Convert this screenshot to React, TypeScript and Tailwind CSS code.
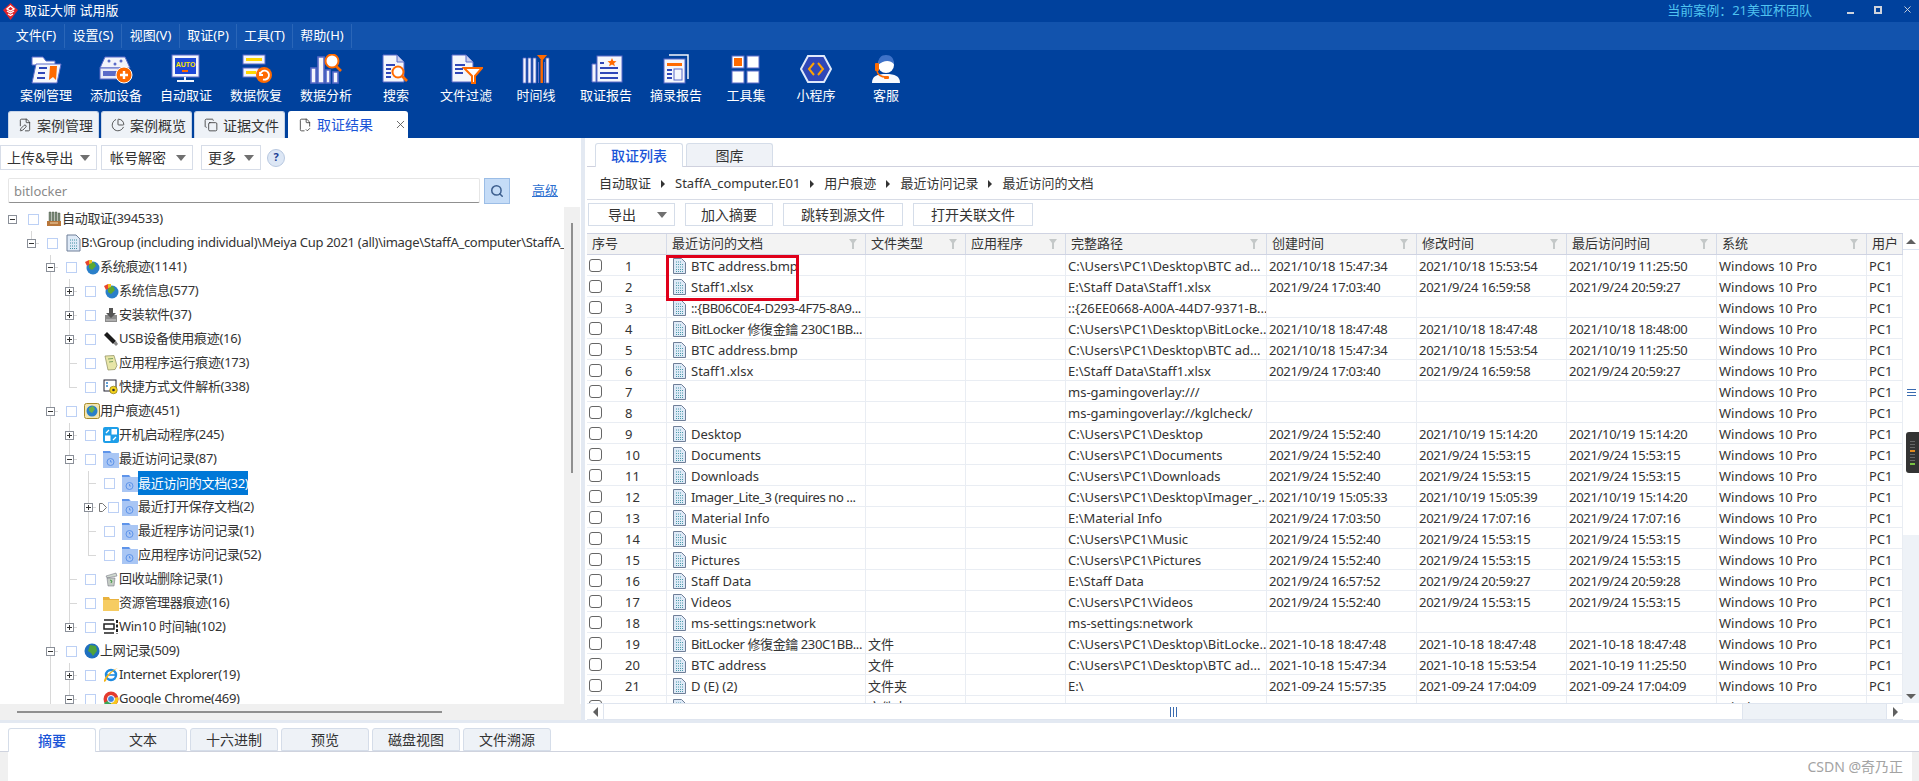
import React from "react";
import { FilePen, PieChart, Copy, FileCheck2, X, Search } from "lucide-react";

// ---- toolbar icons ----
const P = "#5a6bc8";
const O = "#ff6a00";

const ToolIcon = ({ name }: { name: string }) => {
  switch (name) {
    case "case":
      return (
        <svg width="34" height="30" viewBox="0 0 34 30">
          <path d="M3 3h11l3 4h9v4H3z" fill="#fff" stroke={P} />
          <path d="M7 10h25l-4 19H3z" fill="#f4f6fc" stroke={P} />
          <path d="M10 14h8M9 19h7M8 24h8" stroke="#2f47b8" strokeWidth="2" />
          <path d="M21 12h7l-1 14-3-3-4 3z" fill={O} />
        </svg>
      );
    case "device":
      return (
        <svg width="34" height="30" viewBox="0 0 34 30">
          <path d="M6 3h20l5 11H1z" fill="#f2f4fb" stroke={P} />
          <circle cx="10" cy="7" r="1.5" fill={P} />
          <circle cx="22" cy="7" r="1.5" fill={P} />
          <circle cx="16" cy="10" r="1.5" fill={P} />
          <rect x="1" y="14" width="26" height="11" fill="#e8ebf8" stroke={P} />
          <rect x="4" y="17" width="14" height="5" fill={P} />
          <circle cx="25" cy="21" r="8" fill={O} stroke="#fff" />
          <path d="M25 17v8M21 21h8" stroke="#fff" strokeWidth="2.4" />
        </svg>
      );
    case "auto":
      return (
        <svg width="34" height="30" viewBox="0 0 34 30">
          <rect x="3" y="1" width="27" height="22" fill="#f4f6fc" stroke={P} />
          <rect x="6" y="4" width="21" height="16" fill="#1f49d8" />
          <text x="16.5" y="13" fontSize="7" fontWeight="700" fill="#ffe500" textAnchor="middle" fontFamily="Liberation Sans, sans-serif">AUTO</text>
          <rect x="13" y="16" width="6" height="2" fill={O} />
          <path d="M16 23v3M8 27h17" stroke="#f4f6fc" strokeWidth="2" />
        </svg>
      );
    case "recover":
      return (
        <svg width="34" height="30" viewBox="0 0 34 30">
          <rect x="4" y="1" width="22" height="9" fill="#f4f6fc" stroke={P} />
          <rect x="7" y="4" width="16" height="3" fill="#ffd800" />
          <rect x="4" y="14" width="16" height="9" fill="#f4f6fc" stroke={P} />
          <rect x="7" y="17" width="10" height="3" fill="#ffd800" />
          <circle cx="25" cy="21" r="8" fill={O} />
          <path d="M21 21a4.5 4.5 0 1 1 3 4.4M21 18v3h3" fill="none" stroke="#fff" strokeWidth="1.8" />
        </svg>
      );
    case "analysis":
      return (
        <svg width="34" height="30" viewBox="0 0 34 30">
          <path d="M2 14h5v15H2zM9 3h6v26H9zM17 16h4v13h-4zM24 18h5v11h-5z" fill="#f4f6fc" stroke={P} strokeWidth="1.6" />
          <circle cx="23" cy="7" r="6.5" fill="#fff" stroke={O} strokeWidth="2" />
          <path d="M27 12l5 5" stroke={O} strokeWidth="2.6" />
        </svg>
      );
    case "search":
      return (
        <svg width="34" height="30" viewBox="0 0 34 30">
          <path d="M4 1h14l7 7v20H4z" fill="#f4f6fc" stroke={P} />
          <path d="M18 1v7h7" fill="#c9d0ee" stroke={P} />
          <path d="M7 11h9M7 15h5M7 19h5M7 23h5" stroke="#2f47b8" strokeWidth="2" />
          <circle cx="19" cy="18" r="5.5" fill="#fff" stroke={O} strokeWidth="2" />
          <path d="M23 22l5 5" stroke={O} strokeWidth="2.6" />
        </svg>
      );
    case "filter":
      return (
        <svg width="34" height="30" viewBox="0 0 34 30">
          <path d="M3 1h14l7 7v20H3z" fill="#f4f6fc" stroke={P} />
          <path d="M17 1v7h7" fill="#c9d0ee" stroke={P} />
          <path d="M6 11h10M6 15h8M6 19h8" stroke="#2f47b8" strokeWidth="2" />
          <path d="M15 14h18l-7 8v7h-3v-7z" fill="#fff" stroke={O} strokeWidth="2" />
        </svg>
      );
    case "timeline":
      return (
        <svg width="34" height="30" viewBox="0 0 34 30">
          <path d="M4 4h3v25H4zM9 4h3v25H9zM14 4h3v25h-3zM27 4h3v25h-3z" fill="#f4f6fc" stroke={P} strokeWidth=".8" />
          <path d="M19 8h1v21h-1zM25 8h1v21h-1z" fill={P} />
          <path d="M18 1h10l-5 6z" fill={O} />
          <rect x="21.5" y="6" width="2.4" height="23" fill={O} />
        </svg>
      );
    case "report":
      return (
        <svg width="34" height="30" viewBox="0 0 34 30">
          <path d="M7 10H3v18h4z" fill="#f4f6fc" stroke={P} />
          <rect x="8" y="2" width="25" height="26" fill="#f4f6fc" stroke={P} />
          <path d="M23 4l1.3 3 3.2.2-2.4 2 .8 3.1-2.9-1.7-2.9 1.7.8-3.1-2.4-2 3.2-.2z" fill={O} />
          <path d="M11 9h4M11 14h18M11 19h18M11 24h18" stroke="#2f47b8" strokeWidth="2" />
        </svg>
      );
    case "excerpt":
      return (
        <svg width="34" height="30" viewBox="0 0 34 30">
          <path d="M10 1h19v24" fill="none" stroke="#f4f6fc" strokeWidth="1.5" />
          <rect x="5" y="5" width="21" height="24" fill="#f4f6fc" stroke={P} />
          <rect x="8" y="9" width="15" height="3" fill={O} />
          <path d="M8 16h5M8 20h5M8 24h5" stroke="#2f47b8" strokeWidth="2" />
          <rect x="15" y="15" width="8" height="11" fill="#f4f6fc" stroke={P} />
        </svg>
      );
    case "tools":
      return (
        <svg width="34" height="30" viewBox="0 0 34 30">
          <rect x="3" y="2" width="12" height="12" fill="#fff" stroke={P} />
          <rect x="5" y="4" width="8" height="8" fill={O} />
          <rect x="18" y="2" width="12" height="12" fill="#fff" stroke={P} />
          <rect x="3" y="17" width="12" height="12" fill="#fff" stroke={P} />
          <rect x="18" y="17" width="12" height="12" fill="#fff" stroke={P} />
        </svg>
      );
    case "mini":
      return (
        <svg width="34" height="30" viewBox="0 0 34 30">
          <path d="M9 2h16l7 13-7 13H9L2 15z" fill="#2f47b8" stroke="#dfe9fb" strokeWidth="2" />
          <path d="M15 9l-5 6 5 6M19 9l5 6-5 6" fill="none" stroke="#ffa200" strokeWidth="2" />
        </svg>
      );
    default:
      return (
        <svg width="34" height="30" viewBox="0 0 34 30">
          <path d="M3 29c0-7 5-9 14-9s14 2 14 9z" fill="#f8f9fd" />
          <circle cx="17" cy="11" r="8" fill="#fff" />
          <path d="M9 11c0-7 3-10 8-10s8 3 8 9c-4-4-10-4-16 1z" fill="#3f72c8" />
          <rect x="6" y="9" width="4" height="8" rx="1" fill={O} />
          <path d="M8 17c1 5 5 6 9 6" fill="none" stroke={O} strokeWidth="1.4" />
          <rect x="15" y="22" width="5" height="3" rx="1" fill={O} />
        </svg>
      );
  }
};

const Logo = () => (
  <svg width="15" height="17" viewBox="0 0 15 17">
    <path d="M7.5 0L15 7 7.5 17 0 7z" fill="#e2252b" />
    <path d="M7.5 3L11 6 7.5 8 4 6zM4 8l3.5 2L11 8M5 11l2.5 1.5L10 11" fill="none" stroke="#fff" strokeWidth="1.4" />
  </svg>
);

// ---- tree icons ----
const TreeIcon = ({ name }: { name: string }) => {
  switch (name) {
    case "root":
      return (
        <svg width="16" height="16" viewBox="0 0 16 16">
          <path d="M3 1h2v10H3zM6 1h2v10H6zM9 1h2v10H9zM12 2h2v9h-2z" fill="#7f8f7d" stroke="#3c4a3a" strokeWidth=".4" />
          <path d="M1 10h14v5H1z" fill="#b8763a" />
          <path d="M4 12h8" stroke="#f0d8b0" />
        </svg>
      );
    case "doc":
      return (
        <svg width="16" height="18" viewBox="0 0 16 18">
          <path d="M2 1h9l4 4v12H2z" fill="#dfeaf7" stroke="#6f7f98" />
          <path d="M5 6h7M5 9h7M5 12h7M5 14.5h7" stroke="#3f8fa0" strokeDasharray="1 1" />
        </svg>
      );
    case "sys":
      return (
        <svg width="16" height="16" viewBox="0 0 16 16">
          <circle cx="9" cy="9" r="6.5" fill="#2a7fc9" />
          <path d="M5 5l5-2 2 4-4 4-3-2z" fill="#5aa832" />
          <path d="M1 3l4-2 1 4-3 2z" fill="#e8452c" />
          <path d="M5 1l3 0 0 3-3 1z" fill="#f3c11d" />
        </svg>
      );
    case "install":
      return (
        <svg width="16" height="16" viewBox="0 0 16 16">
          <path d="M2 8h12v7H2z" fill="#8b8b8b" />
          <path d="M6 1h4v5h3l-5 5-5-5h3z" fill="#555" />
          <path d="M3 13h10" stroke="#d0d0d0" />
        </svg>
      );
    case "usb":
      return (
        <svg width="16" height="16" viewBox="0 0 16 16">
          <path d="M1 4l3-3 9 9-3 3z" fill="#1c1c1c" />
          <path d="M10.5 12.5l2.5-2.5 2 3-2 2z" fill="#888" />
        </svg>
      );
    case "note":
      return (
        <svg width="16" height="16" viewBox="0 0 16 16">
          <path d="M2 1l9-.5 3 10-2 4-7 .5z" fill="#e8e6a8" stroke="#8d8d5c" strokeWidth=".7" />
          <path d="M5 4l5-.5M6 7l4-.5" stroke="#7aa060" />
        </svg>
      );
    case "shortcut":
      return (
        <svg width="16" height="16" viewBox="0 0 16 16">
          <rect x="1" y="1" width="12" height="11" fill="#fff" stroke="#223" />
          <path d="M3 4h2M3 7h2" stroke="#2a7fc9" strokeWidth="1.5" />
          <circle cx="10.5" cy="11" r="3.8" fill="#f3d21d" stroke="#776600" strokeWidth=".6" />
          <circle cx="10.5" cy="11" r="1.3" fill="#333" />
        </svg>
      );
    case "user":
      return (
        <svg width="16" height="16" viewBox="0 0 16 16">
          <rect x=".5" y=".5" width="15" height="15" rx="2" fill="#f4e6b0" stroke="#a78a2a" />
          <circle cx="8" cy="8" r="5.5" fill="#2a7fc9" />
          <path d="M5 5l4-2 2 3-3 4-3-2z" fill="#6ab04a" />
        </svg>
      );
    case "startup":
      return (
        <svg width="16" height="16" viewBox="0 0 16 16">
          <rect width="16" height="16" rx="2" fill="#1e9ee8" />
          <rect x="2" y="8.5" width="5.5" height="5.5" fill="#fff" />
          <rect x="8.5" y="2" width="5.5" height="5.5" fill="#fff" />
          <path d="M3 6l3-3M10 13l3-3" stroke="#fff" strokeWidth="1.3" />
        </svg>
      );
    case "recent":
      return (
        <svg width="16" height="17" viewBox="0 0 16 17">
          <path d="M0 0h7l2 2h7v15H0z" fill="#a9c6f4" />
          <path d="M0 0h7l1 2H0z" fill="#5e94ea" />
          <circle cx="7.5" cy="11" r="3.5" fill="none" stroke="#5e94ea" />
          <path d="M7.5 9v2H9" fill="none" stroke="#5e94ea" />
        </svg>
      );
    case "bin":
      return (
        <svg width="16" height="16" viewBox="0 0 16 16">
          <path d="M3 5l10-3 1 3-10 2z" fill="#cfd8cf" stroke="#667" strokeWidth=".5" />
          <path d="M4 7h8l-1 8H5z" fill="#c4ccc4" stroke="#667" strokeWidth=".5" />
          <path d="M7 9l2 1-1 2" stroke="#3f9a3f" fill="none" />
        </svg>
      );
    case "folder":
      return (
        <svg width="16" height="16" viewBox="0 0 16 16">
          <path d="M0 2h6l1 2h9v12H0z" fill="#e9b23e" />
          <path d="M0 5h16v11H0z" fill="#f6cc62" />
        </svg>
      );
    case "win10":
      return (
        <svg width="16" height="16" viewBox="0 0 16 16">
          <path d="M1 1h10M1 14h10M1 5h10v5H1z" fill="none" stroke="#222" strokeWidth="1.5" />
          <path d="M14 1v14" stroke="#222" strokeWidth="2" strokeDasharray="3 1.5" />
        </svg>
      );
    case "web":
      return (
        <svg width="16" height="16" viewBox="0 0 16 16">
          <circle cx="8" cy="8" r="7.5" fill="#1f6fc0" />
          <path d="M6 2l6 1 1 5-4 5-2-3-3-2z" fill="#4fa33c" />
        </svg>
      );
    case "ie":
      return (
        <svg width="16" height="16" viewBox="0 0 16 16">
          <circle cx="8" cy="8" r="5" fill="none" stroke="#1f8be0" strokeWidth="2.4" />
          <path d="M4 8h9" stroke="#1f8be0" strokeWidth="1.6" />
          <path d="M1 15C0 11 8 3 15 1c-3 1-11 8-12 13z" fill="#f2b51d" />
        </svg>
      );
    default:
      return (
        <svg width="16" height="16" viewBox="0 0 16 16">
          <circle cx="8" cy="8" r="7.5" fill="#e33b2e" />
          <path d="M8 8L1 12a7.5 7.5 0 0 0 7 3.5z" fill="#3aa655" />
          <path d="M8 8l7-2a7.5 7.5 0 0 1-7 9.5z" fill="#f7c61c" />
          <circle cx="8" cy="8" r="3.5" fill="#3b82e0" stroke="#fff" />
        </svg>
      );
  }
};

const FileIcon = () => (
  <svg width="13" height="16" viewBox="0 0 13 16" className="shrink-0">
    <path d="M.5.5h8l4 4v11H.5z" fill="#dfeaf7" stroke="#6f7f98" />
    <path d="M3 4h5M3 6.5h7M3 9h7M3 11.5h7M3 13.5h7" stroke="#4a9aa8" strokeDasharray="1 1" />
  </svg>
);

const Funnel = () => (
  <svg width="8" height="10" viewBox="0 0 8 10" className="shrink-0">
    <path d="M0 0h8L5 4v6H3V4z" fill="#c4c8c8" />
  </svg>
);

const Caret = () => <span className="ml-auto w-0 h-0 border-x-[5px] border-x-transparent border-t-[6px] border-t-[#707070]" />;

// ---- data ----
const menus = ["文件(F)", "设置(S)", "视图(V)", "取证(P)", "工具(T)", "帮助(H)"];
const menuWidths = ["w-[57px]", "w-[57px]", "w-[58px]", "w-[57px]", "w-[56px]", "w-[59px]"];

const tools = [
  ["case", "案例管理"], ["device", "添加设备"], ["auto", "自动取证"], ["recover", "数据恢复"], ["analysis", "数据分析"],
  ["search", "搜索"], ["filter", "文件过滤"], ["timeline", "时间线"], ["report", "取证报告"], ["excerpt", "摘录报告"],
  ["tools", "工具集"], ["mini", "小程序"], ["service", "客服"],
];

type TreeRow = { level: number; exp?: string; icon: string; label: string; guides: number[]; last?: boolean; selected?: boolean; marker?: boolean };

const tree: TreeRow[] = [
  { level: 0, exp: "-", icon: "root", label: "自动取证(394533)", guides: [] },
  { level: 1, exp: "-", icon: "doc", label: "B:\\Group (including individual)\\Meiya Cup 2021 (all)\\image\\StaffA_computer\\StaffA_computer.E01", guides: [1], last: true },
  { level: 2, exp: "-", icon: "sys", label: "系统痕迹(1141)", guides: [2] },
  { level: 3, exp: "+", icon: "sys", label: "系统信息(577)", guides: [2, 3] },
  { level: 3, exp: "+", icon: "install", label: "安装软件(37)", guides: [2, 3] },
  { level: 3, exp: "+", icon: "usb", label: "USB设备使用痕迹(16)", guides: [2, 3] },
  { level: 3, icon: "note", label: "应用程序运行痕迹(173)", guides: [2, 3] },
  { level: 3, icon: "shortcut", label: "快捷方式文件解析(338)", guides: [2, 3], last: true },
  { level: 2, exp: "-", icon: "user", label: "用户痕迹(451)", guides: [2] },
  { level: 3, exp: "+", icon: "startup", label: "开机启动程序(245)", guides: [2, 3] },
  { level: 3, exp: "-", icon: "recent", label: "最近访问记录(87)", guides: [2, 3] },
  { level: 4, icon: "recent", label: "最近访问的文档(32)", guides: [2, 3, 4], selected: true },
  { level: 4, exp: "+", icon: "recent", label: "最近打开保存文档(2)", guides: [2, 3, 4], marker: true },
  { level: 4, icon: "recent", label: "最近程序访问记录(1)", guides: [2, 3, 4] },
  { level: 4, icon: "recent", label: "应用程序访问记录(52)", guides: [2, 3, 4], last: true },
  { level: 3, icon: "bin", label: "回收站删除记录(1)", guides: [2, 3] },
  { level: 3, icon: "folder", label: "资源管理器痕迹(16)", guides: [2, 3] },
  { level: 3, exp: "+", icon: "win10", label: "Win10 时间轴(102)", guides: [2, 3], last: true },
  { level: 2, exp: "-", icon: "web", label: "上网记录(509)", guides: [2] },
  { level: 3, exp: "+", icon: "ie", label: "Internet Explorer(19)", guides: [2, 3] },
  { level: 3, exp: "-", icon: "chrome", label: "Google Chrome(469)", guides: [2, 3] },
];

const indents = ["pl-[8px]", "pl-[27px]", "pl-[46px]", "pl-[65px]", "pl-[84px]"];

const headers = ["序号", "最近访问的文档", "文件类型", "应用程序", "完整路径", "创建时间", "修改时间", "最后访问时间", "系统", "用户"];
const gridCols = "grid grid-cols-[80px_199px_100px_100px_201px_150px_150px_150px_150px_36px]";

const t1 = ["2021/10/18 15:47:34", "2021/10/18 15:53:54", "2021/10/19 11:25:50"];
const t2 = ["2021/9/24 17:03:40", "2021/9/24 16:59:58", "2021/9/24 20:59:27"];
const t3 = ["2021/9/24 15:52:40", "2021/9/24 15:53:15", "2021/9/24 15:53:15"];
const none = ["", "", ""];

const rows: [string, string, string, string[]][] = [
  ["BTC address.bmp", "", "C:\\Users\\PC1\\Desktop\\BTC ad...", t1],
  ["Staff1.xlsx", "", "E:\\Staff Data\\Staff1.xlsx", t2],
  ["::{BB06C0E4-D293-4F75-8A9...", "", "::{26EE0668-A00A-44D7-9371-B...", none],
  ["BitLocker 修復金鑰 230C1BB...", "", "C:\\Users\\PC1\\Desktop\\BitLocke...", ["2021/10/18 18:47:48", "2021/10/18 18:47:48", "2021/10/18 18:48:00"]],
  ["BTC address.bmp", "", "C:\\Users\\PC1\\Desktop\\BTC ad...", t1],
  ["Staff1.xlsx", "", "E:\\Staff Data\\Staff1.xlsx", t2],
  ["", "", "ms-gamingoverlay:///", none],
  ["", "", "ms-gamingoverlay://kglcheck/", none],
  ["Desktop", "", "C:\\Users\\PC1\\Desktop", ["2021/9/24 15:52:40", "2021/10/19 15:14:20", "2021/10/19 15:14:20"]],
  ["Documents", "", "C:\\Users\\PC1\\Documents", t3],
  ["Downloads", "", "C:\\Users\\PC1\\Downloads", t3],
  ["Imager_Lite_3 (requires no ...", "", "C:\\Users\\PC1\\Desktop\\Imager_...", ["2021/10/19 15:05:33", "2021/10/19 15:05:39", "2021/10/19 15:14:20"]],
  ["Material Info", "", "E:\\Material Info", ["2021/9/24 17:03:50", "2021/9/24 17:07:16", "2021/9/24 17:07:16"]],
  ["Music", "", "C:\\Users\\PC1\\Music", t3],
  ["Pictures", "", "C:\\Users\\PC1\\Pictures", t3],
  ["Staff Data", "", "E:\\Staff Data", ["2021/9/24 16:57:52", "2021/9/24 20:59:27", "2021/9/24 20:59:28"]],
  ["Videos", "", "C:\\Users\\PC1\\Videos", t3],
  ["ms-settings:network", "", "ms-settings:network", none],
  ["BitLocker 修復金鑰 230C1BB...", "文件", "C:\\Users\\PC1\\Desktop\\BitLocke...", ["2021-10-18 18:47:48", "2021-10-18 18:47:48", "2021-10-18 18:47:48"]],
  ["BTC address", "文件", "C:\\Users\\PC1\\Desktop\\BTC ad...", ["2021-10-18 15:47:34", "2021-10-18 15:53:54", "2021-10-19 11:25:50"]],
  ["D (E) (2)", "文件夹", "E:\\", ["2021-09-24 15:57:35", "2021-09-24 17:04:09", "2021-09-24 17:04:09"]],
  ["", "文件夹", "", none],
];

const bottomTabs = ["摘要", "文本", "十六进制", "预览", "磁盘视图", "文件溯源"];

const Cell = ({ children, className = "" }: { children?: React.ReactNode; className?: string }) => (
  <div className={`h-[21px] leading-[22px] border-r border-b border-[#e9edf3] pl-[2px] overflow-hidden whitespace-nowrap ${className}`}>{children}</div>
);

const ArrowL = () => <span className="w-0 h-0 border-y-[5px] border-y-transparent border-r-[5px] border-r-[#606060]" />;
const ArrowR = () => <span className="w-0 h-0 border-y-[5px] border-y-transparent border-l-[5px] border-l-[#606060]" />;
const Crumb = () => <span className="w-0 h-0 mx-[10px] border-y-[4px] border-y-transparent border-l-[4px] border-l-[#333]" />;

export default function App() {
  return (
    <div className="relative w-[1919px] h-[781px] flex flex-col overflow-hidden bg-white text-[#333] text-[13px] font-['Noto_Sans','Noto_Sans_CJK_SC',sans-serif]">
      {/* title bar */}
      <div className="h-[22px] bg-[#00419d] flex items-center text-white">
        <div className="ml-[3px] mr-[6px] flex"><Logo /></div>
        <span>取证大师 试用版</span>
        <span className="ml-auto mr-[35px] text-[#4fc3f0]">当前案例：21美亚杯团队</span>
        <span className="w-[7px] h-[2px] bg-[#cfd3dc] mr-[20px] mt-[3px]" />
        <span className="relative w-[8px] h-[8px] border-2 border-[#cfd3dc] mr-[20px] -mt-[3px]" />
        <X size={11} strokeWidth={2} className="text-[#d6d9e0] mr-[6px] -mt-[3px]" />
      </div>

      {/* menu */}
      <div className="h-[28px] bg-[#1253ad] flex items-center text-white pl-[8px]">
        {menus.map((m, i) => (
          <div key={m} className={`${menuWidths[i]} h-[24px] flex items-center justify-center border-r border-[#2a66b8]`}>{m}</div>
        ))}
      </div>

      {/* toolbar */}
      <div className="h-[61px] bg-[#00419d] flex pl-[11px] pt-[4px] text-white">
        {tools.map(([icon, label]) => (
          <div key={label} className="w-[70px] flex flex-col items-center">
            <ToolIcon name={icon} />
            <span className="mt-[1px] leading-[20px]">{label}</span>
          </div>
        ))}
      </div>

      {/* main tabs */}
      <div className="h-[27px] bg-[#00419d] flex items-end pl-[8px] gap-[2px] text-[14px]">
        {[["案例管理", FilePen], ["案例概览", PieChart], ["证据文件", Copy]].map(([label, Icon]: any) => (
          <div key={label} className="w-[91px] h-[27px] bg-[#eef2f7] border border-b-0 border-[#c8d5e8] rounded-t-[3px] flex items-center pl-[9px] gap-[5px]">
            <Icon size={14} strokeWidth={1.4} className="shrink-0" />
            {label}
          </div>
        ))}
        <div className="w-[120px] h-[27px] bg-white rounded-t-[3px] flex items-center pl-[10px] gap-[5px] ml-[1px] text-[#1a55d8]">
          <FileCheck2 size={14} strokeWidth={1.4} className="shrink-0 text-[#333]" />
          取证结果
          <X size={13} strokeWidth={1.6} className="ml-[16px] text-[#555]" />
        </div>
      </div>

      {/* main */}
      <div className="h-[582px] flex">
        {/* left panel */}
        <div className="w-[581px] flex flex-col">
          <div className="h-[25px] mt-[7px] flex items-center text-[14px]">
            <div className="w-[97px] h-[25px] border border-[#d7dde8] flex items-center pl-[6px] pr-[6px]">上传&导出<Caret /></div>
            <div className="w-[92px] h-[25px] ml-[4px] border border-[#d7dde8] flex items-center pl-[8px] pr-[6px]">帐号解密<Caret /></div>
            <div className="w-[60px] h-[25px] ml-[8px] border border-[#d7dde8] flex items-center pl-[6px] pr-[6px]">更多<Caret /></div>
            <div className="w-[18px] h-[18px] ml-[6px] rounded-full bg-[#dde7f5] border border-[#b8c8e0] flex items-center justify-center text-[11px] font-bold text-[#1c3f94]">?</div>
          </div>
          <div className="h-[25px] mt-[8px] flex items-center">
            <div className="w-[472px] h-[25px] ml-[8px] border-b border-b-[#909090] border border-[#e6e6e6] rounded-[2px] pl-[5px] leading-[24px] text-[#8a8a8a]">bitlocker</div>
            <div className="w-[26px] h-[26px] ml-[4px] bg-[#c5dcf7] border border-[#9bbde6] flex items-center justify-center">
              <Search size={14} strokeWidth={2.6} className="text-[#3d5f8f]" />
            </div>
            <span className="ml-[22px] text-[#2c6fd0] underline">高级</span>
          </div>
          <div className="h-[497px] mt-[4px] flex">
            <div className="w-[564px] overflow-hidden">
              {tree.map((r) => (
                <div key={r.label} className={`relative h-[24px] flex items-center whitespace-nowrap ${indents[r.level]}`}>
                  {r.guides.map((g) => (
                    <span
                      key={g}
                      className="absolute top-0 w-px bg-[#d8d8d8]"
                      style={{ left: 12 + 19 * g, height: g === r.level && r.last ? 12 : 24 }}
                    />
                  ))}
                  {r.level > 0 && <span className="absolute top-[12px] h-px w-[8px] bg-[#d8d8d8]" style={{ left: 12 + 19 * r.level }} />}
                  <span className="relative w-[9px] h-[9px] shrink-0">
                    {r.exp && (
                      <span className="absolute inset-0 border border-[#8a8f98] bg-white flex items-center justify-center">
                        <span className="w-[5px] h-px bg-[#333]" />
                        {r.exp === "+" && <span className="absolute w-px h-[5px] bg-[#333]" />}
                      </span>
                    )}
                  </span>
                  {r.marker && (
                    <svg width="8" height="9" viewBox="0 0 8 9" className="absolute left-[99px] top-[8px]">
                      <path d="M.5.5h3l4 4-4 4h-3z" fill="#fff" stroke="#777" />
                    </svg>
                  )}
                  <span className={`relative w-[11px] h-[11px] shrink-0 border border-[#bcd0f5] bg-white ${r.marker ? "ml-[15px]" : "ml-[11px]"}`} />
                  <span className={`w-[16px] flex justify-center shrink-0 ${r.marker ? "ml-[3px]" : "ml-[7px]"}`}>
                    <TreeIcon name={r.icon} />
                  </span>
                  <span className={`tracking-[-0.3px] ${r.selected ? "bg-[#0078d7] text-white h-[24px] leading-[24px]" : ""}`}>{r.label}</span>
                </div>
              ))}
            </div>
            <div className="w-[16px] bg-[#f0f0f0] flex justify-center">
              <div className="w-[2px] h-[250px] mt-[16px] bg-[#8f8f8f]" />
            </div>
          </div>
          <div className="h-[16px] bg-[#f0f0f0] flex items-center">
            <div className="w-[425px] h-[2px] ml-[17px] bg-[#8f8f8f]" />
          </div>
        </div>

        <div className="w-[4px] bg-[#e3e9f2]" />

        {/* right panel */}
        <div className="w-[1334px] flex flex-col pl-[2px]">
          <div className="h-[29px] pt-[5px] pl-[8px] flex items-end gap-[3px] border-b border-[#cfd1de] text-[14px]">
            <div className="w-[88px] h-[24px] -mb-px bg-white border border-b-0 border-[#d5dde9] rounded-t-[3px] flex items-center justify-center text-[#1a55d8] font-medium">取证列表</div>
            <div className="w-[87px] h-[23px] bg-[#eff2f7] border border-b-0 border-[#d5dde9] rounded-t-[3px] flex items-center justify-center">图库</div>
          </div>
          <div className="h-[33px] pl-[12px] pt-[1px] flex items-center border-b border-[#d8dce6]">
            自动取证<Crumb />StaffA_computer.E01<Crumb />用户痕迹<Crumb />最近访问记录<Crumb />最近访问的文档
          </div>
          <div className="h-[23px] mt-[3px] flex pl-[1px] gap-[10px] text-[14px]">
            <div className="w-[87px] border border-[#d5dde9] flex items-center pl-[19px] pr-[7px]">导出<Caret /></div>
            <div className="w-[88px] border border-[#d5dde9] flex items-center justify-center">加入摘要</div>
            <div className="w-[120px] border border-[#d5dde9] flex items-center justify-center">跳转到源文件</div>
            <div className="w-[120px] border border-[#d5dde9] flex items-center justify-center">打开关联文件</div>
          </div>

          <div className="h-[470px] mt-[7px] flex">
            <div className="relative w-[1316px] overflow-hidden flex flex-col">
              <div className={`${gridCols} h-[22px] bg-[#f3f3f3] border-y border-[#cfd3e2] shrink-0`}>
                {headers.map((h, i) => (
                  <div key={h} className={`flex items-center pl-[5px] border-r border-[#d5dbe8] whitespace-nowrap ${i === 9 ? "" : "pr-[8px]"}`}>
                    <span>{h}</span>
                    {i > 0 && i < 9 && <span className="ml-auto"><Funnel /></span>}
                  </div>
                ))}
              </div>
              {rows.map((r, i) => (
                <div key={i} className={`${gridCols} shrink-0`}>
                  <Cell className="flex items-center pt-[1px]">
                    <span className="w-[13px] h-[13px] border border-[#666] rounded-[3px] shrink-0 bg-white" />
                    <span className="ml-[23px]">{i + 1}</span>
                  </Cell>
                  <Cell className="flex items-center pl-[6px] pt-[1px]">
                    <FileIcon />
                    <span className={`ml-[5px] ${r[0].endsWith("...") ? "tracking-[-0.4px]" : ""}`}>{r[0]}</span>
                  </Cell>
                  <Cell>{r[1]}</Cell>
                  <Cell />
                  <Cell>{r[2]}</Cell>
                  {r[3].map((d, k) => (
                    <Cell key={k} className="tracking-[-0.3px]">{d}</Cell>
                  ))}
                  <Cell>Windows 10 Pro</Cell>
                  <Cell>{i < 21 ? "PC1" : ""}</Cell>
                </div>
              ))}
              {/* red highlight around the first two rows */}
              <div className="absolute left-[79px] top-[22px] w-[133px] h-[46px] border-[3px] border-[#e0001a]" />
            </div>
            <div className="w-[16px] flex flex-col items-center bg-[#eef2f7]">
              <div className="h-[17px] w-full bg-white flex items-center justify-center border-b border-[#dbe3f0]">
                <span className="w-0 h-0 border-x-[5px] border-x-transparent border-b-[5px] border-b-[#606060]" />
              </div>
              <div className="h-[285px] w-full bg-white flex flex-col items-center justify-center gap-[2px]">
                <span className="w-[9px] h-px bg-[#3a6bb0]" />
                <span className="w-[9px] h-px bg-[#3a6bb0]" />
                <span className="w-[9px] h-px bg-[#3a6bb0]" />
              </div>
              <div className="mt-auto h-[14px] flex items-center">
                <span className="w-0 h-0 border-x-[5px] border-x-transparent border-t-[5px] border-t-[#606060]" />
              </div>
            </div>
          </div>

          <div className="h-[17px] w-[1316px] flex bg-[#eef2f7] border-t border-b border-[#dfe5ef]">
            <div className="w-[17px] flex items-center justify-center bg-white border-r border-[#dfe5ef]"><ArrowL /></div>
            <div className="w-[1139px] bg-white flex items-center justify-center gap-[2px] border-r border-[#dfe5ef]">
              <span className="w-px h-[10px] bg-[#3a6bb0]" />
              <span className="w-px h-[10px] bg-[#3a6bb0]" />
              <span className="w-px h-[10px] bg-[#3a6bb0]" />
            </div>
            <div className="ml-auto w-[17px] flex items-center justify-center bg-white border-l border-[#dfe5ef]"><ArrowR /></div>
          </div>
        </div>
      </div>

      <div className="h-[3px] bg-[#e3e9f2]" />

      {/* bottom tabs */}
      <div className="h-[29px] pt-[5px] pl-[8px] flex gap-[3px] border-b border-[#cfd3de] text-[14px]">
        {bottomTabs.map((t, i) => (
          <div
            key={t}
            className={`w-[88px] border border-[#d5dde9] rounded-t-[3px] flex items-center justify-center ${
              i === 0 ? "bg-white border-b-0 text-[#1a55d8] font-medium h-[24px]" : "bg-[#eef2f7] h-[23px]"
            }`}
          >
            {t}
          </div>
        ))}
      </div>
      <div className="flex-1 flex">
        <div className="w-[8px] bg-[#f0f0f0]" />
        <div className="flex-1 flex items-center justify-end pr-[9px] pb-[1px] text-[#a3a3a3] text-[14px]">CSDN @奇乃正</div>
        <div className="w-[7px] bg-[#f0f0f0]" />
      </div>

      {/* dark widget floating at the right edge */}
      <div className="absolute left-[1906px] top-[432px] w-[13px] h-[41px] bg-[#333] rounded-l-[3px] flex flex-col items-center justify-center gap-[2px]">
        <span className="w-[5px] h-px bg-[#666]" />
        <span className="w-[5px] h-px bg-[#666]" />
        <span className="w-[5px] h-px bg-[#666]" />
        <span className="w-[5px] h-[2px] bg-[#e08a20]" />
        <span className="w-[5px] h-px bg-[#666]" />
        <span className="w-[5px] h-px bg-[#666]" />
        <span className="w-[5px] h-px bg-[#666]" />
        <span className="w-[5px] h-[2px] bg-[#7ac143]" />
      </div>
    </div>
  );
}
